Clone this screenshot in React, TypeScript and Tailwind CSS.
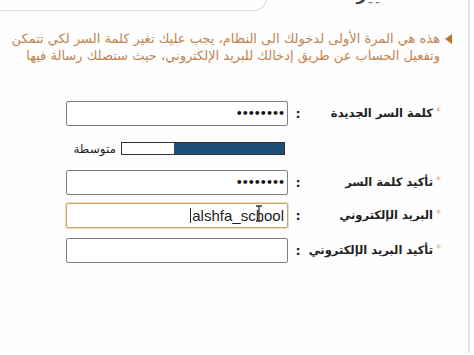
import React from "react";

const font = { fontFamily: '"DejaVu Sans", "Liberation Sans", sans-serif' };

function Row({ label, children }: { label: string; children: React.ReactNode }) {
  return (
    <div className="flex items-center h-[25px]">
      <div className="w-[133px] flex items-center gap-[3px] h-full">
        <span className="text-[10px] text-[#d9b38c] -mt-[4px]">*</span>
        <span className="text-[11.5px] font-bold text-[#222] whitespace-nowrap tracking-[-0.2px]">{label}</span>
      </div>
      <div className="w-[20px] text-[13px] font-bold text-[#222] text-center">:</div>
      {children}
    </div>
  );
}

function Input({ value, active, dots }: { value?: string; active?: boolean; dots?: boolean }) {
  return (
    <div
      className={`relative w-[222px] h-[25px] bg-white rounded-[2px] border flex items-center px-[3px] ${
        active ? "border-[#c9a66b] shadow-[0_0_0_1px_#ecdcbc]" : "border-[#808080]"
      }`}
    >
      {dots && (
        <span className="text-[11px] font-bold text-[#111] tracking-[-1px] leading-none">••••••••</span>
      )}
      {value && (
        <span
          className="text-[15px] text-[#222] leading-none border-l border-[#222] pl-[1px]"
          style={{ fontFamily: '"Liberation Sans", Arial, sans-serif' }}
          dir="ltr"
        >
          {value}
        </span>
      )}
      {active && (
        <svg className="absolute left-[188px] top-[1px]" width="8" height="18" viewBox="0 0 8 18">
          <path d="M1 1 H7 M4 1 V16 M1 16 H7" stroke="#333" strokeWidth="1.3" fill="none" />
        </svg>
      )}
    </div>
  );
}

export default function App() {
  return (
    <div className="w-[474px] h-[355px] bg-white overflow-hidden" style={font}>
      <div className="w-[470px] h-[353px] border-r-2 border-[#e4e4e4] bg-[#fefefe]" dir="rtl">
        {/* top */}
        <div className="h-[13px] flex overflow-hidden" dir="ltr">
          <div className="w-[267px] h-[13px] border-b border-r border-[#dcdcdc] rounded-br-[14px] -mt-[2px]" />
          <div className="flex-1 flex overflow-hidden pl-[45px]">
            <span className="text-[17px] font-bold text-[#444] -mt-[18px] whitespace-nowrap tracking-[3px]" dir="rtl">
              تغيير كلمة
            </span>
          </div>
        </div>

        {/* intro */}
        <div className="mt-[17px] flex items-start pr-[16px]">
          <svg width="7" height="10" viewBox="0 0 7 10" className="mt-[4px] shrink-0">
            <path d="M7 0 L0 5 L7 10 Z" fill="#c0742a" />
          </svg>
          <div className="mr-[5px] text-[13px] leading-[17px] text-[#c08552] whitespace-nowrap">
            <div>هذه هي المرة الأولى لدخولك الى النظام، يجب عليك تغير كلمة السر لكي تتمكن</div>
            <div>وتفعيل الحساب عن طريق إدخالك للبريد الإلكتروني، حيث ستصلك رسالة فيها</div>
          </div>
        </div>

        {/* form */}
        <div className="mt-[37px] pr-[27px] flex flex-col">
          <Row label="كلمة السر الجديدة">
            <Input dots />
          </Row>
          <div className="flex items-center h-[13px] mt-[16px]">
            <div className="w-[156px]" />
            <div className="w-[164px] h-[13px] border border-[#333] flex bg-white">
              <div className="w-[110px] h-full bg-[#1e4f78]" />
            </div>
            <span className="mr-[5px] text-[12px] text-[#222] whitespace-nowrap">متوسطة</span>
          </div>
          <div className="mt-[15px]">
            <Row label="تأكيد كلمة السر">
              <Input dots />
            </Row>
          </div>
          <div className="mt-[8px]">
            <Row label="البريد الإلكتروني">
              <Input value="alshfa_school" active />
            </Row>
          </div>
          <div className="mt-[10px]">
            <Row label="تأكيد البريد الإلكتروني">
              <Input />
            </Row>
          </div>
        </div>
      </div>
    </div>
  );
}
